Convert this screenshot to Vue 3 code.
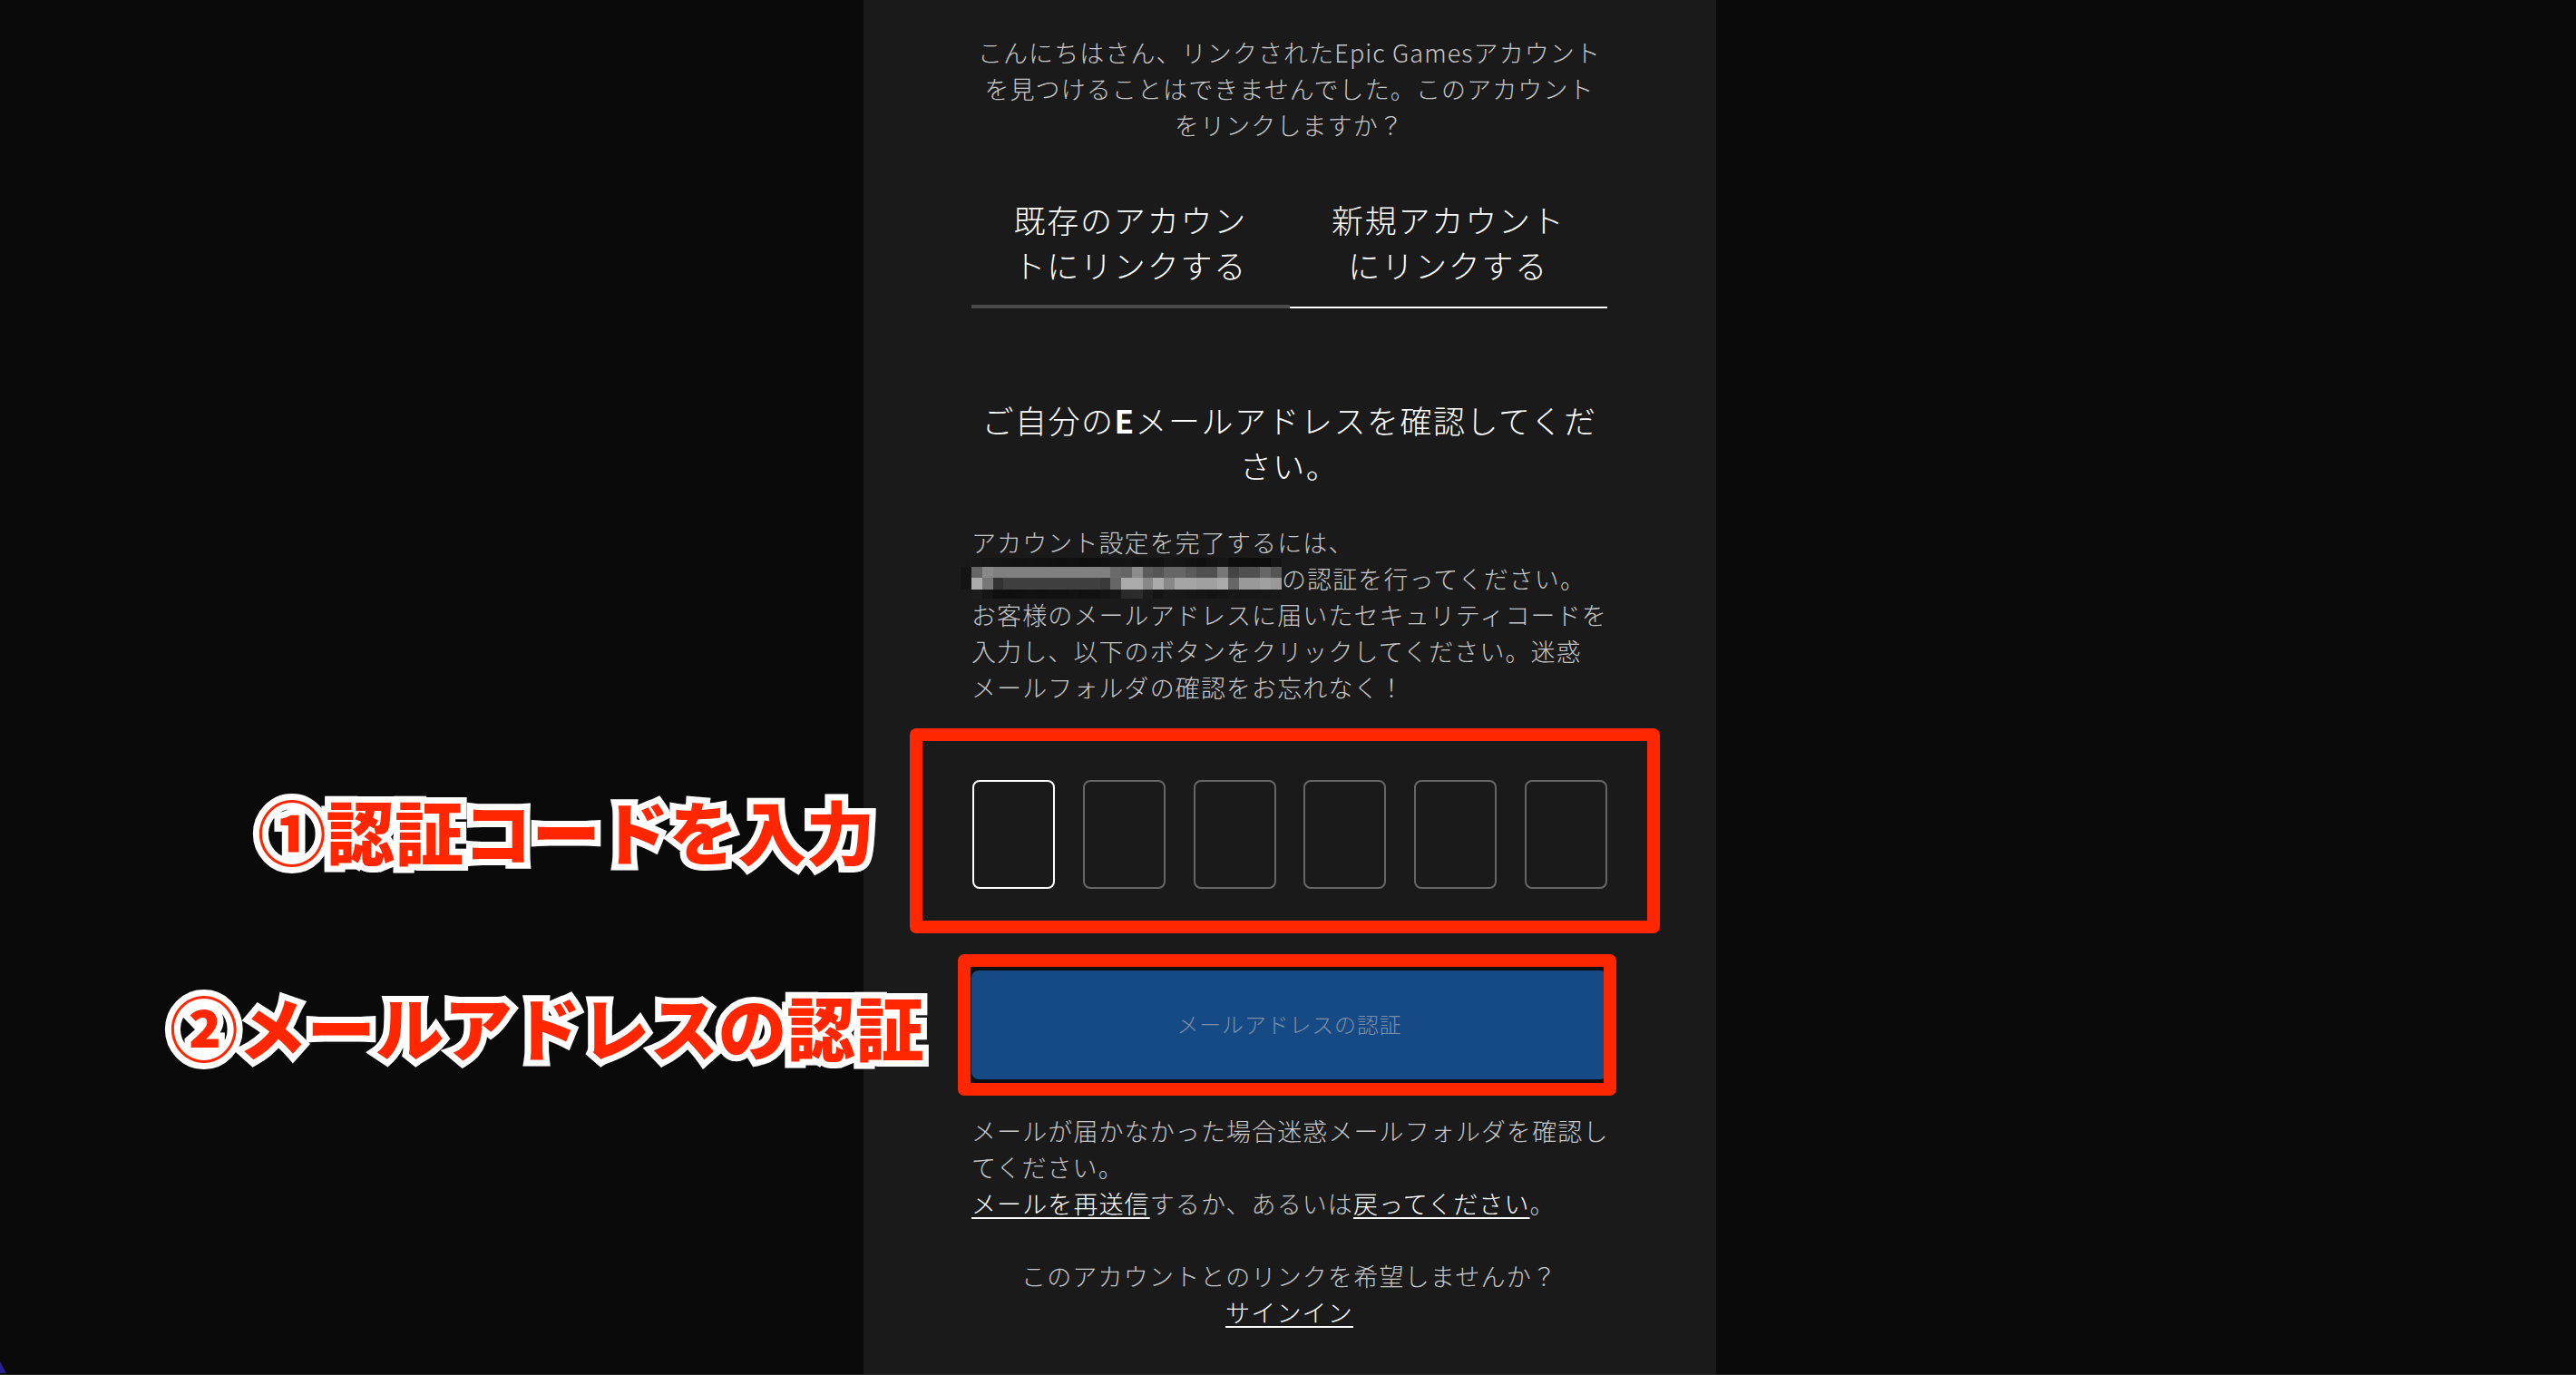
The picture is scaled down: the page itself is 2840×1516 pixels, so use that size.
<script setup>
const row1 = ['#171717','#151515','#141414','#131313','#121212','#131313','#121212','#111','#0f0f0f','#101010','#0e0e0e','#0f0f0f','#111','#131313','#141414','#121212','#131313','#111','#161616','#141414','#121212','#0f0f0f','#131313','#161616','#0e0e0e','#0e0e0e','#0c0c0c','#0c0c0c','#141414']
const row2 = ['#666','#888','#808080','#808080','#808080','#808080','#808080','#808080','#808080','#808080','#808080','#808080','#808080','#6a6a6a','#666','#8c8c8c','#5c5c5c','#555','#666','#666','#5a5a5a','#505050','#505050','#777','#444','#505050','#505050','#666','#555']
const row3 = ['#aaa','#777','#333','#404040','#404040','#404040','#404040','#404040','#404040','#404040','#404040','#404040','#3a3a3a','#666','#aaa','#aaa','#888','#aaa','#888','#a5a5a5','#a5a5a5','#a0a0a0','#a0a0a0','#aaa','#666','#999','#999','#a0a0a0','#999']
const row4 = ['#1c1c1c','#151515','#0f0f0f','#0e0e0e','#0f0f0f','#101010','#0f0f0f','#101010','#101010','#121212','#101010','#111','#141414','#161616','#2a2a2a','#2c2c2c','#1c1c1c','#141414','#181818','#181818','#171717','#151515','#131313','#151515','#171717','#161616','#161616','#171717','#181818']
const mosaicCells = [...row1, ...row2, ...row3, ...row4]
const otpBoxes = [1, 2, 3, 4, 5, 6]
</script>

<template>
  <div class="page">
    <main class="panel">
      <p class="intro">こんにちはさん、リンクされたEpic Gamesアカウント<br>を見つけることはできませんでした。このアカウント<br>をリンクしますか？</p>

      <div class="tabs">
        <div class="tab">既存のアカウントにリンクする</div>
        <div class="tab tab-active">新規アカウントにリンクする</div>
      </div>

      <h1 class="heading">ご自分の<b class="latin">E</b>メールアドレスを確認してください。</h1>

      <p class="body-text">アカウント設定を完了するには、<br><span class="mosaic-slot"><span class="mosaic"><i v-for="(c, i) in mosaicCells" :key="i" :style="{ background: c }"></i></span></span>の認証を行ってください。<br>お客様のメールアドレスに届いたセキュリティコードを<br>入力し、以下のボタンをクリックしてください。迷惑<br>メールフォルダの確認をお忘れなく！</p>

      <div class="otp">
        <div v-for="n in otpBoxes" :key="n" class="otp-box" :class="{ 'otp-focus': n === 1 }"></div>
      </div>

      <button class="verify" type="button">メールアドレスの認証</button>

      <p class="help">メールが届かなかった場合迷惑メールフォルダを確認し<br>てください。<br><a class="link">メールを再送信</a>するか、あるいは<a class="link">戻ってください</a>。</p>

      <p class="decline">このアカウントとのリンクを希望しませんか？<br><a class="link">サインイン</a></p>
    </main>

    <div class="mark mark-code"></div>
    <div class="mark mark-button"></div>
    <div class="note note-code">①認証コードを入力</div>
    <div class="note note-button">②メールアドレスの認証</div>

    <svg class="corner" width="8" height="14" viewBox="0 0 8 14"><polygon points="0,0 7,13 0,13" fill="#2a1f8f" /></svg>
  </div>
</template>

<style scoped>
.page {
  position: relative;
  width: 2840px;
  height: 1516px;
  overflow: hidden;
  background: #0a0a0a;
  font-family: "Noto Sans CJK JP", "Noto Sans", sans-serif;
  font-weight: 300;
}
.page::after {
  content: "";
  position: absolute;
  left: 0;
  right: 0;
  bottom: 0;
  height: 1px;
  background: #2a2a2a;
}
.panel {
  box-sizing: border-box;
  width: 940px;
  height: 1516px;
  margin-left: 952px;
  padding: 38px 120px 0 119px;
  background: #1a1a1a;
}
p, h1 {
  margin: 0;
}
.intro {
  font-size: 27px;
  line-height: 40px;
  letter-spacing: 1.1px;
  white-space: nowrap;
  color: #c6c6c6;
  text-align: center;
}
.tabs {
  display: grid;
  grid-template-columns: 1fr 1fr;
  margin-top: 59px;
}
.tab {
  padding: 0 40px 19px;
  border-bottom: 4px solid #4a4a4a;
  font-size: 35px;
  line-height: 50px;
  letter-spacing: 1.8px;
  color: #fff;
  text-align: center;
}
.tab-active {
  padding-bottom: 21px;
  border-bottom: 2px solid #fff;
}
.heading {
  margin-top: 98px;
  font-size: 35px;
  font-weight: 300;
  line-height: 50px;
  letter-spacing: 1.5px;
  color: #fff;
  text-align: center;
}
.latin {
  font-weight: 700;
}
.body-text {
  margin-top: 40px;
  font-size: 27px;
  line-height: 40px;
  letter-spacing: 1.1px;
  white-space: nowrap;
  color: #c6c6c6;
}
.mosaic-slot {
  display: inline-block;
  position: relative;
  width: 342px;
  height: 40px;
  vertical-align: top;
}
.mosaic {
  position: absolute;
  left: 0;
  top: -3px;
  width: 342px;
  height: 45px;
  display: grid;
  grid-template-columns: repeat(29, 1fr);
  grid-template-rows: 10px 12px 13px 10px;
}
.mosaic::before {
  content: "";
  position: absolute;
  left: -12px;
  top: 10px;
  width: 12px;
  height: 25px;
  background: #141414;
}
.otp {
  display: flex;
  justify-content: space-between;
  margin-top: 82px;
  padding-left: 1px;
}
.otp-box {
  box-sizing: border-box;
  width: 91px;
  height: 120px;
  border: 2px solid #666;
  border-radius: 8px;
}
.otp-focus {
  border-color: #fff;
}
.verify {
  display: block;
  width: 100%;
  height: 120px;
  margin-top: 90px;
  padding: 0 0 4px;
  border: 0;
  border-radius: 8px;
  background: #164a85;
  box-shadow: 0 0 0 4px #0f0f0f;
  font-family: inherit;
  font-weight: 300;
  font-size: 24px;
  letter-spacing: 0.8px;
  color: #7d8fa6;
  text-align: center;
}
.help {
  margin-top: 37px;
  font-size: 27px;
  line-height: 40px;
  letter-spacing: 1.1px;
  white-space: nowrap;
  color: #c6c6c6;
}
.decline {
  margin-top: 40px;
  font-size: 27px;
  line-height: 40px;
  letter-spacing: 1.2px;
  color: #c6c6c6;
  text-align: center;
}
.link {
  color: #fff;
  text-decoration: underline;
  text-decoration-thickness: 2px;
  text-underline-offset: 4px;
}
.mark {
  position: absolute;
  box-sizing: border-box;
  border: 14px solid #ff2600;
  border-radius: 7px;
}
.mark-code {
  left: 1003px;
  top: 803px;
  width: 827px;
  height: 226px;
}
.mark-button {
  left: 1056px;
  top: 1052px;
  width: 726px;
  height: 156px;
}
.note {
  position: absolute;
  font-size: 75.6px;
  font-weight: 900;
  line-height: 90px;
  white-space: nowrap;
  color: #ff2600;
  -webkit-text-stroke: 14px #fff;
  paint-order: stroke fill;
}
.note-code {
  left: 284px;
  top: 870px;
}
.note-button {
  left: 187px;
  top: 1086px;
}
.corner {
  position: absolute;
  left: 0;
  bottom: 1px;
}
</style>
